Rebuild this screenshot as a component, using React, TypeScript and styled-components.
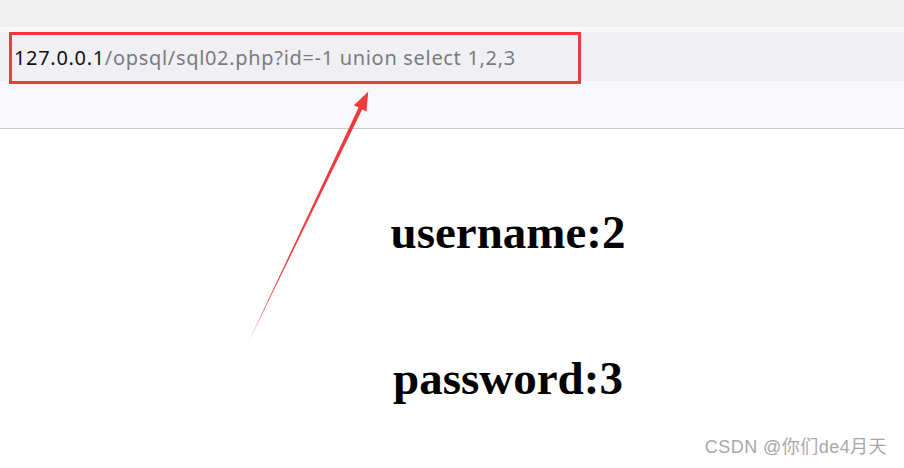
import React from "react";
import styled, { createGlobalStyle } from "styled-components";

const Global = createGlobalStyle`
  html, body { margin: 0; padding: 0; background: #ffffff; }
  body { width: 904px; height: 468px; overflow: hidden; }
`;

const Page = styled.div`
  position: relative;
  width: 904px;
  height: 468px;
  display: flex;
  flex-direction: column;
  background: #ffffff;
`;

const TabStrip = styled.div`
  height: 27px;
  background: #efefef;
`;

const Seam = styled.div`
  height: 5px;
  background: #f8f8fa;
`;

const AddressRow = styled.div`
  height: 49px;
  background: #f0f0f4;
  display: flex;
  align-items: center;
  padding-left: 14px;
`;

const Url = styled.span`
  font-family: "Noto Sans", "Open Sans", sans-serif;
  font-size: 20px;
  letter-spacing: 0.68px;
  color: #7b7b7b;
  white-space: nowrap;
  padding-top: 1px;
`;

const Host = styled.span`
  color: #111111;
`;

const Toolbar = styled.div`
  height: 47px;
  background: #f8f8fa;
  border-bottom: 1px solid #c9c9cc;
`;

const Content = styled.main`
  flex: 1;
  display: flex;
  flex-direction: column;
  align-items: center;
  padding: 80px 0 0 112px;
  gap: 99px;
`;

const Field = styled.h1`
  margin: 0;
  font-family: "Liberation Serif", "Times New Roman", serif;
  font-weight: bold;
  font-size: 47px;
  line-height: 1;
  color: #000000;
`;

const Highlight = styled.div`
  position: absolute;
  left: 9px;
  top: 32px;
  width: 572px;
  height: 52px;
  box-sizing: border-box;
  border: 3px solid #f03a3e;
`;

const ArrowLayer = styled.svg`
  position: absolute;
  left: 0;
  top: 0;
  pointer-events: none;
`;

const Watermark = styled.div`
  position: absolute;
  right: 17px;
  top: 436px;
  font-family: "Liberation Sans", Arial, "Noto Sans CJK SC", sans-serif;
  font-size: 18px;
  letter-spacing: 0.45px;
  line-height: 22px;
  color: #a8a8a8;
  white-space: nowrap;
`;

export default function App() {
  return (
    <Page>
      <Global />
      <TabStrip />
      <Seam />
      <AddressRow>
        <Url>
          <Host>127.0.0.1</Host>/opsql/sql02.php?id=-1 union select 1,2,3
        </Url>
      </AddressRow>
      <Toolbar />
      <Content>
        <Field>username:2</Field>
        <Field>password:3</Field>
      </Content>
      <Highlight />
      <ArrowLayer width="904" height="468" viewBox="0 0 904 468">
        <polygon
          points="248,343 362.2,109.4 366.5,111.4 368.2,91.8 353.9,105.2 358.6,107.6"
          fill="#f03a3e"
        />
      </ArrowLayer>
      <Watermark>CSDN @你们de4月天</Watermark>
    </Page>
  );
}
